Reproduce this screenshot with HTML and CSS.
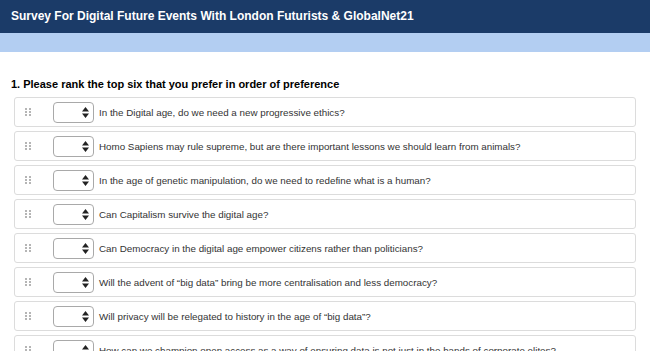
FILE: index.html
```html
<!DOCTYPE html>
<html lang="en">
<head>
    <meta charset="UTF-8">
    <meta name="viewport" content="width=device-width, initial-scale=1.0">
    <title>Survey For Digital Future Events</title>
    <link rel="stylesheet" href="styles.css">
</head>
<body>
    <!-- Survey title bar -->
    <header class="survey-header">
        <h1 class="survey-title">Survey For Digital Future Events With London Futurists &amp; GlobalNet21</h1>
    </header>
    <div class="progress-band"></div>

    <main class="survey-body">
        <h2 class="question-title">1. Please rank the top six that you prefer in order of preference</h2>

        <ul class="rank-list">
            <li class="rank-row">
                <span class="drag-handle"><svg width="6" height="8" viewBox="0 0 6 8"><g fill="#b5b5b5"><rect x="0" y="0" width="2" height="2"/><rect x="4" y="0" width="2" height="2"/><rect x="0" y="3" width="2" height="2"/><rect x="4" y="3" width="2" height="2"/><rect x="0" y="6" width="2" height="2"/><rect x="4" y="6" width="2" height="2"/></g></svg></span>
                <span class="rank-select"><svg width="7" height="11" viewBox="0 0 7 11"><path d="M3.5 0 L7 4.5 L0 4.5 Z M0 6.5 L7 6.5 L3.5 11 Z" fill="#222"/></svg></span>
                <span class="rank-text">In the Digital age, do we need a new progressive ethics?</span>
            </li>
            <li class="rank-row">
                <span class="drag-handle"><svg width="6" height="8" viewBox="0 0 6 8"><g fill="#b5b5b5"><rect x="0" y="0" width="2" height="2"/><rect x="4" y="0" width="2" height="2"/><rect x="0" y="3" width="2" height="2"/><rect x="4" y="3" width="2" height="2"/><rect x="0" y="6" width="2" height="2"/><rect x="4" y="6" width="2" height="2"/></g></svg></span>
                <span class="rank-select"><svg width="7" height="11" viewBox="0 0 7 11"><path d="M3.5 0 L7 4.5 L0 4.5 Z M0 6.5 L7 6.5 L3.5 11 Z" fill="#222"/></svg></span>
                <span class="rank-text">Homo Sapiens may rule supreme, but are there important lessons we should learn from animals?</span>
            </li>
            <li class="rank-row">
                <span class="drag-handle"><svg width="6" height="8" viewBox="0 0 6 8"><g fill="#b5b5b5"><rect x="0" y="0" width="2" height="2"/><rect x="4" y="0" width="2" height="2"/><rect x="0" y="3" width="2" height="2"/><rect x="4" y="3" width="2" height="2"/><rect x="0" y="6" width="2" height="2"/><rect x="4" y="6" width="2" height="2"/></g></svg></span>
                <span class="rank-select"><svg width="7" height="11" viewBox="0 0 7 11"><path d="M3.5 0 L7 4.5 L0 4.5 Z M0 6.5 L7 6.5 L3.5 11 Z" fill="#222"/></svg></span>
                <span class="rank-text">In the age of genetic manipulation, do we need to redefine what is a human?</span>
            </li>
            <li class="rank-row">
                <span class="drag-handle"><svg width="6" height="8" viewBox="0 0 6 8"><g fill="#b5b5b5"><rect x="0" y="0" width="2" height="2"/><rect x="4" y="0" width="2" height="2"/><rect x="0" y="3" width="2" height="2"/><rect x="4" y="3" width="2" height="2"/><rect x="0" y="6" width="2" height="2"/><rect x="4" y="6" width="2" height="2"/></g></svg></span>
                <span class="rank-select"><svg width="7" height="11" viewBox="0 0 7 11"><path d="M3.5 0 L7 4.5 L0 4.5 Z M0 6.5 L7 6.5 L3.5 11 Z" fill="#222"/></svg></span>
                <span class="rank-text">Can Capitalism survive the digital age?</span>
            </li>
            <li class="rank-row">
                <span class="drag-handle"><svg width="6" height="8" viewBox="0 0 6 8"><g fill="#b5b5b5"><rect x="0" y="0" width="2" height="2"/><rect x="4" y="0" width="2" height="2"/><rect x="0" y="3" width="2" height="2"/><rect x="4" y="3" width="2" height="2"/><rect x="0" y="6" width="2" height="2"/><rect x="4" y="6" width="2" height="2"/></g></svg></span>
                <span class="rank-select"><svg width="7" height="11" viewBox="0 0 7 11"><path d="M3.5 0 L7 4.5 L0 4.5 Z M0 6.5 L7 6.5 L3.5 11 Z" fill="#222"/></svg></span>
                <span class="rank-text">Can Democracy in the digital age empower citizens rather than politicians?</span>
            </li>
            <li class="rank-row">
                <span class="drag-handle"><svg width="6" height="8" viewBox="0 0 6 8"><g fill="#b5b5b5"><rect x="0" y="0" width="2" height="2"/><rect x="4" y="0" width="2" height="2"/><rect x="0" y="3" width="2" height="2"/><rect x="4" y="3" width="2" height="2"/><rect x="0" y="6" width="2" height="2"/><rect x="4" y="6" width="2" height="2"/></g></svg></span>
                <span class="rank-select"><svg width="7" height="11" viewBox="0 0 7 11"><path d="M3.5 0 L7 4.5 L0 4.5 Z M0 6.5 L7 6.5 L3.5 11 Z" fill="#222"/></svg></span>
                <span class="rank-text">Will the advent of &ldquo;big data&rdquo; bring be more centralisation and less democracy?</span>
            </li>
            <li class="rank-row">
                <span class="drag-handle"><svg width="6" height="8" viewBox="0 0 6 8"><g fill="#b5b5b5"><rect x="0" y="0" width="2" height="2"/><rect x="4" y="0" width="2" height="2"/><rect x="0" y="3" width="2" height="2"/><rect x="4" y="3" width="2" height="2"/><rect x="0" y="6" width="2" height="2"/><rect x="4" y="6" width="2" height="2"/></g></svg></span>
                <span class="rank-select"><svg width="7" height="11" viewBox="0 0 7 11"><path d="M3.5 0 L7 4.5 L0 4.5 Z M0 6.5 L7 6.5 L3.5 11 Z" fill="#222"/></svg></span>
                <span class="rank-text">Will privacy will be relegated to history in the age of &ldquo;big data&rdquo;?</span>
            </li>
            <li class="rank-row">
                <span class="drag-handle"><svg width="6" height="8" viewBox="0 0 6 8"><g fill="#b5b5b5"><rect x="0" y="0" width="2" height="2"/><rect x="4" y="0" width="2" height="2"/><rect x="0" y="3" width="2" height="2"/><rect x="4" y="3" width="2" height="2"/><rect x="0" y="6" width="2" height="2"/><rect x="4" y="6" width="2" height="2"/></g></svg></span>
                <span class="rank-select"><svg width="7" height="11" viewBox="0 0 7 11"><path d="M3.5 0 L7 4.5 L0 4.5 Z M0 6.5 L7 6.5 L3.5 11 Z" fill="#222"/></svg></span>
                <span class="rank-text">How can we champion open access as a way of ensuring data is not just in the hands of corporate elites?</span>
            </li>
        </ul>
    </main>
</body>
</html>
```

FILE: styles.css
```css
/* Page basics */
body {
    margin: 0;
    font-family: "Liberation Sans", Arial, sans-serif;
    background-color: #fff;
    color: #333;
    overflow: hidden;
}

/* Title bar */
.survey-header {
    background-color: #1b3b68;
    height: 33px;
    padding: 0 11px;
    display: flex;
    align-items: center;
}

.survey-title {
    margin: 0 0 2px;
    font-size: 12px;
    font-weight: bold;
    color: #fff;
}

/* Light blue strip below the title */
.progress-band {
    height: 19px;
    background-color: #b3cef2;
}

.survey-body {
    padding: 24px 11px 0;
}

.question-title {
    margin: 0 0 5px;
    font-size: 11px;
    font-weight: bold;
    color: #000;
    line-height: 16px;
}

/* Ranking rows */
.rank-list {
    list-style: none;
    margin: 0;
    padding: 0 3px;
    display: flex;
    flex-direction: column;
    gap: 4px;
}

.rank-row {
    height: 30px;
    box-sizing: border-box;
    border: 1px solid #dcdcdc;
    border-radius: 3px;
    display: flex;
    align-items: center;
    padding-left: 10px;
}

.drag-handle {
    width: 6px;
    height: 8px;
    display: flex;
    margin-right: 22px;
}

.rank-select {
    width: 41px;
    height: 21px;
    box-sizing: border-box;
    border: 1px solid #a9a9a9;
    border-radius: 4px;
    display: flex;
    align-items: center;
    justify-content: flex-end;
    padding-right: 4px;
    margin-right: 5px;
}

.rank-text {
    font-size: 9.8px;
    color: #333;
    white-space: nowrap;
}
```
